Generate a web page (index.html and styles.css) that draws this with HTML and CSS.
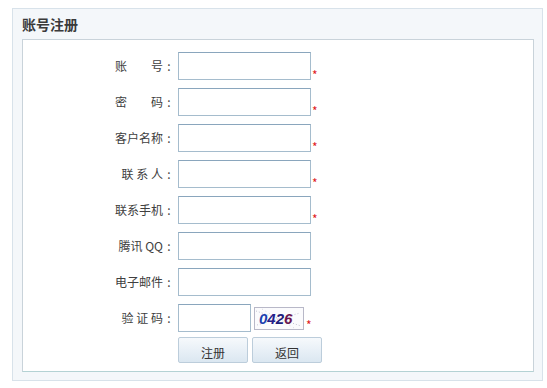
FILE: index.html
```html
<!DOCTYPE html>
<html lang="zh">
<head>
<meta charset="utf-8">
<title>账号注册</title>
<link rel="stylesheet" href="styles.css">
</head>
<body>
<div class="panel">
  <div class="panel-title">账号注册</div>
  <div class="panel-body">
    <div class="form">
      <label class="lbl">账　　号<span class="colon">:</span></label>
      <div class="field"><input class="txt" type="text"><span class="req">*</span></div>

      <label class="lbl">密　　码<span class="colon">:</span></label>
      <div class="field"><input class="txt" type="password"><span class="req">*</span></div>

      <label class="lbl">客户名称<span class="colon">:</span></label>
      <div class="field"><input class="txt" type="text"><span class="req">*</span></div>

      <label class="lbl">联 系 人<span class="colon">:</span></label>
      <div class="field"><input class="txt" type="text"><span class="req">*</span></div>

      <label class="lbl">联系手机<span class="colon">:</span></label>
      <div class="field"><input class="txt" type="text"><span class="req">*</span></div>

      <label class="lbl">腾讯 QQ<span class="colon">:</span></label>
      <div class="field"><input class="txt" type="text"></div>

      <label class="lbl">电子邮件<span class="colon">:</span></label>
      <div class="field"><input class="txt" type="text"></div>

      <label class="lbl">验 证 码<span class="colon">:</span></label>
      <div class="field">
        <input class="txt short" type="text">
        <span class="captcha">
          <svg width="50" height="23" viewBox="0 0 50 23">
            <rect x="0.5" y="0.5" width="49" height="22" fill="#fbfbfd" stroke="#b8b8c8"/>
            <path d="M2 4 L47 19" stroke="#9a9ab0" stroke-width="0.6" stroke-dasharray="1 2"/>
            <path d="M3 18 L46 6" stroke="#a0a0b8" stroke-width="0.6" stroke-dasharray="1 2"/>
            <path d="M8 2 L40 21" stroke="#b0b0c0" stroke-width="0.5" stroke-dasharray="1 3"/>
            <text x="5" y="17" font-family="Liberation Sans, Arial, sans-serif" font-size="15" font-weight="bold" font-style="italic"><tspan fill="#1a3fb0">0</tspan><tspan fill="#24208a">4</tspan><tspan fill="#1e1c7a">2</tspan><tspan fill="#6a1650">6</tspan></text>
          </svg>
        </span>
        <span class="req req-cap">*</span>
      </div>

      <div class="spacer"></div>
      <div class="buttons">
        <button class="btn" type="button">注册</button>
        <button class="btn" type="button">返回</button>
      </div>
    </div>
  </div>
</div>
</body>
</html>
```

FILE: styles.css
```css
html, body {
  margin: 0;
  padding: 0;
  background: #ffffff;
}

body {
  font-family: "Noto Sans CJK SC", "Liberation Sans", sans-serif;
  font-size: 12px;
  color: #333333;
}

.panel {
  margin: 8px 0 0 12px;
  width: 529px;
  height: 371px;
  border: 1px solid #d8e2ea;
  background: #f4f7fa;
  display: flex;
  flex-direction: column;
}

.panel-title {
  height: 30px;
  padding-left: 9px;
  font-size: 14px;
  font-weight: bold;
  color: #3a3a3a;
  line-height: 30px;
}

.panel-body {
  margin: 0 0 0 9px;
  width: 510px;
  height: 331px;
  background: #ffffff;
  border: 1px solid #c9d3da;
  border-bottom-color: #b4d2d4;
}

.form {
  display: grid;
  grid-template-columns: 152px 1fr;
  grid-auto-rows: 28px;
  column-gap: 3px;
  row-gap: 8px;
  padding-top: 12px;
}

.lbl {
  display: block;
  height: 28px;
  overflow: hidden;
  text-align: right;
  line-height: 28px;
  white-space: pre;
  color: #404040;
}

.colon {
  display: inline-block;
  width: 12px;
  line-height: 28px;
  text-align: center;
  vertical-align: top;
}

.field {
  display: flex;
  align-items: flex-end;
  height: 28px;
}

.txt {
  box-sizing: border-box;
  width: 133px;
  height: 28px;
  margin: 0;
  padding: 0 3px;
  border: 1px solid #a5bccd;
  border-top-color: #8aa6bd;
  background: #ffffff;
  font-family: inherit;
  font-size: 12px;
  outline: none;
}

.txt.short {
  width: 73px;
}

.req {
  color: #e02020;
  font-size: 12px;
  line-height: 12px;
  height: 12px;
  margin-left: 1px;
  margin-bottom: -1px;
}

.captcha {
  display: block;
  margin-left: 3px;
  align-self: center;
  height: 23px;
}

.captcha svg {
  display: block;
}

.req-cap {
  margin-left: 2px;
  margin-bottom: 1px;
}

.spacer {
  height: 0;
}

.buttons {
  display: flex;
  gap: 4px;
  margin-top: -3px;
  height: 26px;
}

.btn {
  box-sizing: border-box;
  width: 70px;
  height: 26px;
  margin: 0;
  padding: 5px 0 0 0;
  border: 1px solid #bccddb;
  border-radius: 2px;
  background: linear-gradient(#f6f9fc, #dbe7f1);
  font-family: inherit;
  font-size: 12px;
  color: #333333;
  cursor: pointer;
}
```
